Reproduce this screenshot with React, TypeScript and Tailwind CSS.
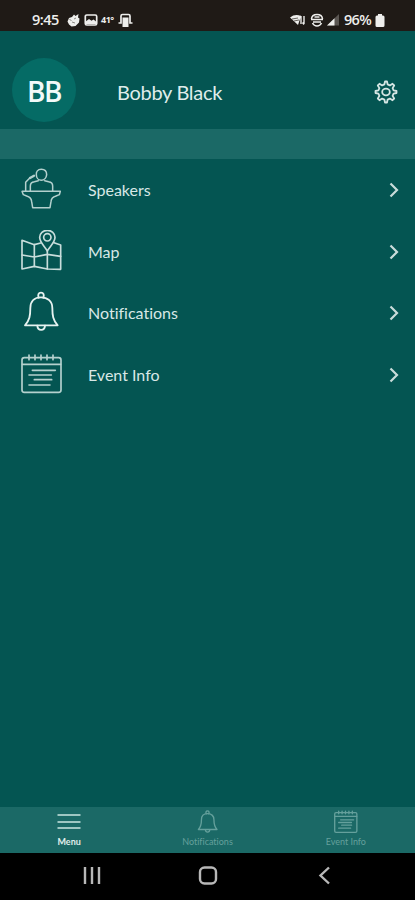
import type { ReactNode } from "react";

type IconProps = { className?: string; strokeWidth?: number };

function LineIcon({ className, strokeWidth = 4, children }: IconProps & { children: ReactNode }) {
  return (
    <svg
      viewBox="0 0 132 132"
      className={className}
      fill="none"
      stroke="currentColor"
      strokeWidth={strokeWidth}
      strokeLinecap="round"
      strokeLinejoin="round"
    >
      {children}
    </svg>
  );
}

function SpeakerIcon(props: IconProps) {
  return (
    <LineIcon {...props}>
      <path d="M67 4c-11 0-16 7-15 16 0 9 6 17 15 17s15-8 16-17c0-9-5-16-16-16z" />
      <path d="M34 69V54c0-8 4-12 12-13l12-3M77 38l12 3c8 1 12 5 12 13v15" />
      <path d="M20 69V43l13-14" />
      <path d="M33 30l12-7" strokeWidth="7" />
      <path d="M9 70h115l-3 10-10 4q-14 4-15 17l-3 18H41l-3-18q-1-13-15-17l-10-4z" />
    </LineIcon>
  );
}

function MapIcon(props: IconProps) {
  return (
    <LineIcon {...props}>
      <path d="M65 39l-19 5L9 31v86l37-8 39 8 40 1V45l-20-7" />
      <path d="M46 44v65M85 64v53M9 75l37 6 39-8 40 6" />
      <path d="M85 63C76 48 62 37 62 22a23 21 0 0 1 46 0c0 15-14 26-23 41z" />
      <circle cx="85" cy="22" r="11" />
    </LineIcon>
  );
}

function BellIcon(props: IconProps) {
  return (
    <LineIcon {...props}>
      <path d="M59 20c-3-8-1-15 7-15s10 7 7 15" />
      <path d="M66 19c-20 0-32 12-32 32 0 22-2 36-16 52h98c-14-16-16-30-16-52 0-20-14-32-34-32z" />
      <path d="M55 104c1 17 22 17 23 0" />
    </LineIcon>
  );
}

function EventIcon(props: IconProps) {
  return (
    <LineIcon {...props}>
      <rect x="9" y="14" width="117" height="104" rx="7" />
      <path d="M10 34h115M30 6v14M48 6v14M66 6v14M84 6v14M102 6v14" />
      <path d="M40 52h69M30 66h67M46 80h52M30 96h63" />
    </LineIcon>
  );
}

function GearIcon() {
  return (
    <svg viewBox="0 0 24 24" className="mt-[3px] h-6 w-6 text-[#d5e6e4]" fill="none" stroke="currentColor" strokeWidth="1.8" strokeLinejoin="round">
      <path d="M10.4 4.400 11 1.500h2l.6 2.900 2.300 1 2.600-1.600 1.700 1.700-1.600 2.600 1 2.300 2.900.6v2l-2.900.6-1 2.300 1.600 2.600-1.700 1.700-2.600-1.600-2.300 1-.6 2.900h-2l-.6-2.900-2.300-1-2.600 1.600-1.700-1.700 1.600-2.600-1-2.300-2.900-.6v-2l2.900-.6 1-2.300-1.600-2.600 1.700-1.700 2.600 1.600z" />
      <ellipse cx="12" cy="12" rx="3.800" ry="3.300" />
    </svg>
  );
}

function StatusBar() {
  return (
    <div className="flex h-[31px] items-end justify-between bg-[#1f1a16] pr-[30px] pb-[3px] pl-8 text-[#eeeeec]">
      <div className="flex h-4 items-center">
        <span className="w-[35px] font-['Open_Sans',sans-serif] text-[14.5px] leading-4 font-semibold tracking-[-0.5px]">9:45</span>
        <svg viewBox="0 0 13 14" className="h-3.5 w-[13px]" fill="currentColor">
          <path d="M5 4 7 1.500l1.500 1.500L11.500 1 11 4.500l1.500 1-.5 4-3.500 3.500-4 .5-2.500-2-1.500-3L2 5z" />
          <path d="M2.500 6.500l2 1M7 6l2-1M5 9l3 1" stroke="#8b8884" />
        </svg>
        <svg viewBox="0 0 14 14" className="ml-1 h-3.5 w-3.5">
          <rect x="1.300" y="2" width="11.400" height="10" rx="1.500" fill="none" stroke="currentColor" strokeWidth="1.700" />
          <path d="M2 10.500V8.300l3-2.300 2.500 1.700 2-1.300L12 8.500v2.500H2z" fill="currentColor" />
        </svg>
        <span className="ml-[3px] w-4 font-['Open_Sans',sans-serif] text-[9px] leading-4 font-bold tracking-[-0.5px]">41°</span>
        <svg viewBox="0 0 15 14" className="ml-px h-3.5 w-[15px]">
          <path d="M.5 10H3V3q0-1.500 1.500-1.500h6Q12 1.500 12 3v7h2.500" fill="none" stroke="currentColor" strokeWidth="1.700" />
          <path d="M4.500 4.500h6V14h-6z" fill="currentColor" />
        </svg>
      </div>
      <div className="flex h-4 items-center">
        <svg viewBox="0 0 16 14" className="h-3.5 w-4">
          <path d="M0 4.500Q5 .5 11 3L8 12z" fill="currentColor" />
          <path d="M2 6l6-1M4 8l5-1" stroke="#68645f" />
          <path d="M11 3v8M14 3v8M9.500 5 11 3M12.500 9.500 14 11.500" fill="none" stroke="currentColor" strokeWidth="1.400" />
        </svg>
        <svg viewBox="0 0 14 14" className="ml-[4px] h-3.5 w-3.5" fill="none" stroke="currentColor" strokeWidth="1.600">
          <path d="M1.500 6C2 0 12 0 12.500 6M1 6.500h12M3 9h8M2.500 10c2 4 7 4 9 0M4.500 4h5" />
        </svg>
        <svg viewBox="0 0 12 12" className="ml-[3px] h-3 w-3">
          <path d="M0 11.500 12 0v11.500z" fill="#5a5652" />
          <path d="M0 11.500 7.500 4.300v7.200z" fill="currentColor" />
        </svg>
        <span className="ml-[5px] w-[31px] font-['Open_Sans',sans-serif] text-[14.5px] leading-4 font-semibold tracking-[-0.7px]">96%</span>
        <svg viewBox="0 0 10 13" className="h-[13px] w-[10px]" fill="currentColor">
          <path d="M3 0h4v1.500h1Q9.500 1.500 9.500 3v8.500Q9.500 13 8 13H2Q.5 13 .5 11.500V3Q.5 1.500 2 1.500h1z" />
        </svg>
      </div>
    </div>
  );
}

const menuItems = [
  { label: "Speakers", Icon: SpeakerIcon, color: "text-[#b3d0cd]", stroke: 4.5 },
  { label: "Map", Icon: MapIcon, color: "text-[#c8dddb]", stroke: 5 },
  { label: "Notifications", Icon: BellIcon, color: "text-[#e6f2f0]", stroke: 5.5 },
  { label: "Event Info", Icon: EventIcon, color: "text-[#b5d1ce]", stroke: 5 },
];

export default function App() {
  return (
    <div className="flex h-[900px] w-full flex-col overflow-hidden bg-[#045552] font-[Lato,sans-serif] [font-variant-ligatures:none]">
      <StatusBar />
      <header className="flex h-[98px] items-center pt-5 pr-[17px] pl-3">
        <div className="flex h-16 w-16 items-center justify-center rounded-full bg-[#056b65] pt-px font-['Open_Sans',sans-serif] text-[28px] font-semibold tracking-[-1.5px] text-[#f2faf9]">
          BB
        </div>
        <h1 className="mt-[3px] ml-[41px] flex-1 text-[20px] tracking-[-0.3px] text-[#dfecea]">Bobby Black</h1>
        <GearIcon />
      </header>
      <div className="h-[30px] bg-[#1b6966]" />
      <nav className="flex-1 pt-[0.5px]">
        {menuItems.map(({ label, Icon, color, stroke }) => (
          <a key={label} className="flex h-[61.5px] items-center pr-4 pl-[19px]">
            <Icon className={`h-11 w-11 ${color}`} strokeWidth={stroke} />
            <span className="ml-[25px] flex-1 text-[16px] text-[#d8e8e6]">{label}</span>
            <svg viewBox="0 0 10 16" className="h-4 w-2.5 text-[#c9dcda]" fill="none" stroke="currentColor" strokeWidth="2.200">
              <path d="m1.500 1.500 6.500 6.500-6.500 6.500" />
            </svg>
          </a>
        ))}
      </nav>
      <footer className="grid h-[46px] grid-cols-3 bg-[#1b6966] text-[9px] leading-3 text-[#65a09c]">
        <div className="flex flex-col items-center text-[#e0eeec]">
          <svg viewBox="0 0 24 25" className="mt-[3px] h-[25px] w-6 text-[#9fc7c3]" stroke="currentColor" strokeWidth="2">
            <path d="M.5 5h23M.5 12h23M.5 18h23" />
          </svg>
          <span className="mt-px font-bold">Menu</span>
        </div>
        <div className="flex flex-col items-center">
          <BellIcon className="mt-[3px] h-[25px] w-[25px]" strokeWidth={7} />
          <span className="mt-px">Notifications</span>
        </div>
        <div className="flex flex-col items-center">
          <EventIcon className="mt-[3px] h-[25px] w-[25px]" strokeWidth={7} />
          <span className="mt-px">Event Info</span>
        </div>
      </footer>
      <div className="h-[47px] bg-black">
        <svg viewBox="0 0 415 47" className="h-[47px] w-[415px]" fill="none" stroke="#b8b8b8" strokeWidth="2.400">
          <path d="M85 14v17M92 14v17M99 14v17" />
          <rect x="200" y="14.500" width="16" height="16" rx="4.500" />
          <path d="m329 14.500-8.500 8 8.500 8" />
        </svg>
      </div>
    </div>
  );
}
